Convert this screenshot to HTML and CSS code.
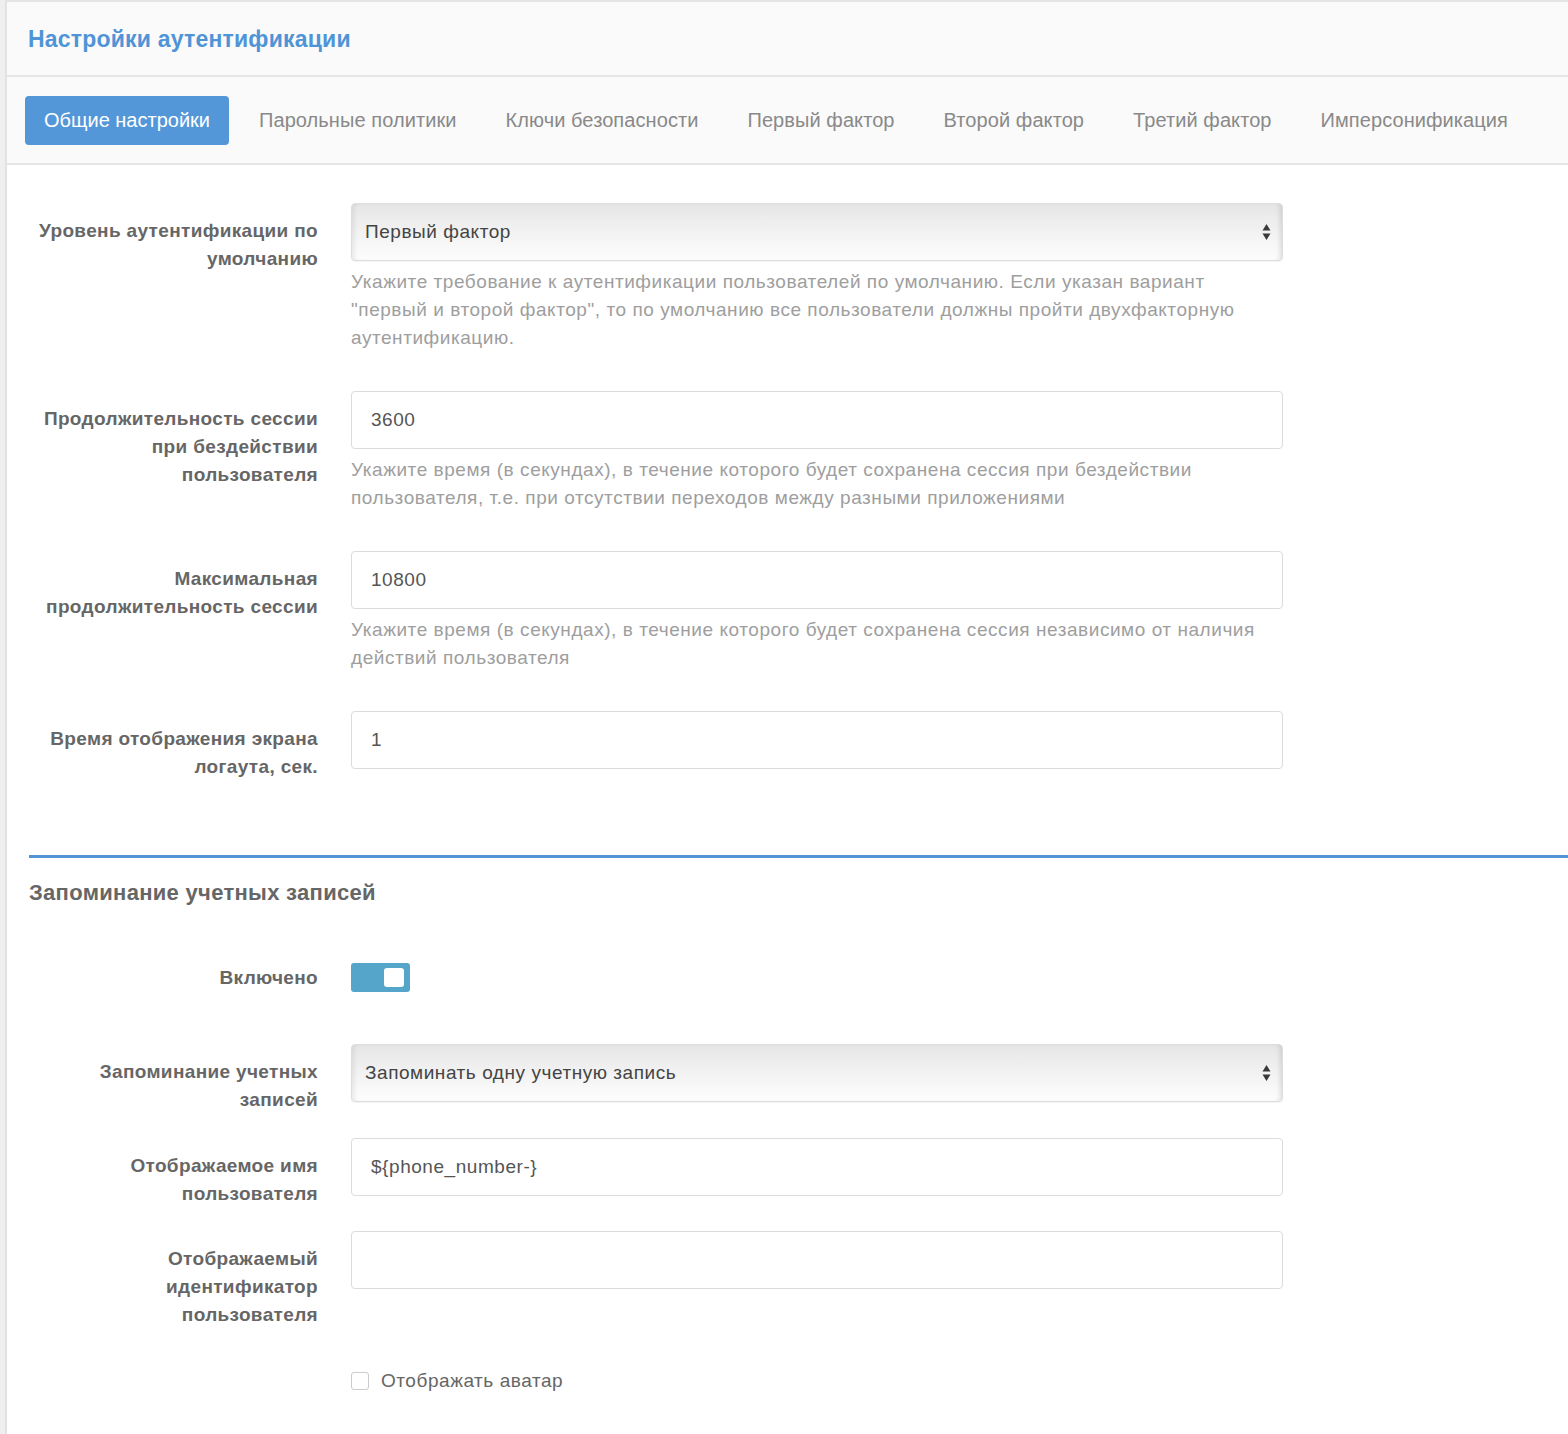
FILE: index.html
```html
<!DOCTYPE html>
<html lang="ru">
<head>
<meta charset="utf-8">
<title>Настройки аутентификации</title>
<link rel="stylesheet" href="styles.css">
</head>
<body>
<div class="panel">
  <div class="panel-head">
    <h1 class="panel-title">Настройки аутентификации</h1>
  </div>
  <div class="tabs">
    <span class="tab active">Общие настройки</span>
    <span class="tab">Парольные политики</span>
    <span class="tab">Ключи безопасности</span>
    <span class="tab">Первый фактор</span>
    <span class="tab">Второй фактор</span>
    <span class="tab">Третий фактор</span>
    <span class="tab">Имперсонификация</span>
  </div>
  <div class="panel-body">
    <div class="row">
      <div class="label">Уровень аутентификации по умолчанию</div>
      <div class="field">
        <div class="select"><span>Первый фактор</span><svg class="arrows" width="9" height="18" viewBox="0 0 9 18"><path d="M4.5 1 L8.5 7.5 L0.5 7.5 Z M4.5 17 L8.5 10.5 L0.5 10.5 Z" fill="#3a3a3a"/></svg></div>
        <div class="help">Укажите требование к аутентификации пользователей по умолчанию. Если указан вариант "первый и второй фактор", то по умолчанию все пользователи должны пройти двухфакторную аутентификацию.</div>
      </div>
    </div>
    <div class="row">
      <div class="label">Продолжительность сессии при бездействии пользователя</div>
      <div class="field">
        <div class="input">3600</div>
        <div class="help">Укажите время (в секундах), в течение которого будет сохранена сессия при бездействии пользователя, т.е. при отсутствии переходов между разными приложениями</div>
      </div>
    </div>
    <div class="row">
      <div class="label">Максимальная продолжительность сессии</div>
      <div class="field">
        <div class="input">10800</div>
        <div class="help">Укажите время (в секундах), в течение которого будет сохранена сессия независимо от наличия действий пользователя</div>
      </div>
    </div>
    <div class="row">
      <div class="label">Время отображения экрана логаута, сек.</div>
      <div class="field">
        <div class="input">1</div>
      </div>
    </div>

    <hr class="divider">
    <h2 class="section-title">Запоминание учетных записей</h2>

    <div class="row row-toggle">
      <div class="label">Включено</div>
      <div class="field">
        <div class="toggle"><span class="knob"></span></div>
      </div>
    </div>
    <div class="row">
      <div class="label">Запоминание учетных записей</div>
      <div class="field">
        <div class="select"><span>Запоминать одну учетную запись</span><svg class="arrows" width="9" height="18" viewBox="0 0 9 18"><path d="M4.5 1 L8.5 7.5 L0.5 7.5 Z M4.5 17 L8.5 10.5 L0.5 10.5 Z" fill="#3a3a3a"/></svg></div>
      </div>
    </div>
    <div class="row row-tight">
      <div class="label">Отображаемое имя пользователя</div>
      <div class="field">
        <div class="input">${phone_number-}</div>
      </div>
    </div>
    <div class="row">
      <div class="label">Отображаемый идентификатор пользователя</div>
      <div class="field">
        <div class="input"></div>
      </div>
    </div>
    <div class="row">
      <div class="label"></div>
      <div class="field check-field">
        <span class="checkbox"></span><span class="check-text">Отображать аватар</span>
      </div>
    </div>
  </div>
</div>
</body>
</html>
```

FILE: styles.css
```css
html, body {
  margin: 0;
  padding: 0;
}
body {
  background: #efefef;
  font-family: "Liberation Sans", Arial, sans-serif;
  font-size: 19px;
  letter-spacing: 0.55px;
  color: #555;
  height: 1434px;
  overflow: hidden;
}
.panel {
  margin-left: 5px;
  border-top: 2px solid #e4e4e4;
  border-left: 2px solid #e2e2e2;
  background: #fff;
  min-height: 1432px;
}
.panel-head {
  background: #fafafa;
  height: 73px;
  border-bottom: 2px solid #e6e6e6;
  display: flex;
  align-items: center;
  padding-left: 21px;
}
.panel-title {
  margin: 0;
  font-size: 23px;
  letter-spacing: 0.2px;
  font-weight: bold;
  color: #4f94d6;
  line-height: 28px;
}
.tabs {
  background: #fafafa;
  display: flex;
  gap: 11px;
  padding: 19px 18px 18px;
  border-bottom: 2px solid #e6e6e6;
}
.tab {
  display: block;
  height: 49px;
  line-height: 49px;
  padding: 0 19px;
  border-radius: 4px;
  color: #898989;
  font-size: 20px;
  letter-spacing: 0.08px;
  white-space: nowrap;
}
.tab.active {
  background: #5397d8;
  color: #fff;
  letter-spacing: 0;
}
.panel-body {
  padding: 38px 0 0 22px;
}
.row {
  display: grid;
  grid-template-columns: 289px 932px;
  column-gap: 33px;
  margin-bottom: 24px;
}
.row-tight {
  margin-bottom: 23px;
}
.label {
  text-align: right;
  font-weight: bold;
  font-size: 19px;
  letter-spacing: 0.35px;
  color: #666;
  line-height: 28px;
  padding-top: 14px;
}
.input, .select {
  box-sizing: border-box;
  height: 58px;
  border: 1px solid #dcdcdc;
  border-radius: 4px;
  display: flex;
  align-items: center;
  color: #555;
}
.input {
  padding-left: 19px;
  background: #fff;
}
.select {
  padding-left: 13px;
  padding-right: 10px;
  justify-content: space-between;
  color: #444;
  background: linear-gradient(#e6e6e6 0%, #f1f1f1 45%, #fdfdfd 100%);
  border-color: #dedede;
  box-shadow: inset 5px 0 5px -3px rgba(0,0,0,0.08), inset -5px 0 5px -3px rgba(0,0,0,0.12), 0 1px 1px rgba(0,0,0,0.05);
}
.arrows {
  display: block;
  margin-right: 1px;
}
.help {
  margin-top: 7px;
  margin-bottom: 15px;
  line-height: 28px;
  color: #9e9e9e;
}
.divider {
  border: 0;
  height: 3px;
  background: #5394d4;
  margin: 74px 0 0 0;
}
.section-title {
  margin: 21px 0 0 0;
  font-size: 22px;
  letter-spacing: 0.3px;
  line-height: 28px;
  font-weight: bold;
  color: #666;
}
.row-toggle {
  margin-top: 43px;
  margin-bottom: 52px;
}
.row-toggle .label {
  padding-top: 14px;
}
.row-toggle .field {
  padding-top: 13px;
}
.toggle {
  width: 59px;
  height: 29px;
  border-radius: 3px;
  background: #55a5cb;
  display: flex;
  align-items: center;
  justify-content: flex-end;
  padding-right: 6px;
  box-sizing: border-box;
}
.knob {
  width: 20px;
  height: 19px;
  border-radius: 3px;
  background: #fff;
}
.check-field {
  padding-top: 14px;
  display: flex;
  align-items: center;
  height: 28px;
}
.checkbox {
  width: 16px;
  height: 16px;
  border: 1px solid #ccc;
  border-radius: 3px;
  background: #fff;
  margin-right: 12px;
}
.check-text {
  color: #666;
  line-height: 28px;
}
```
